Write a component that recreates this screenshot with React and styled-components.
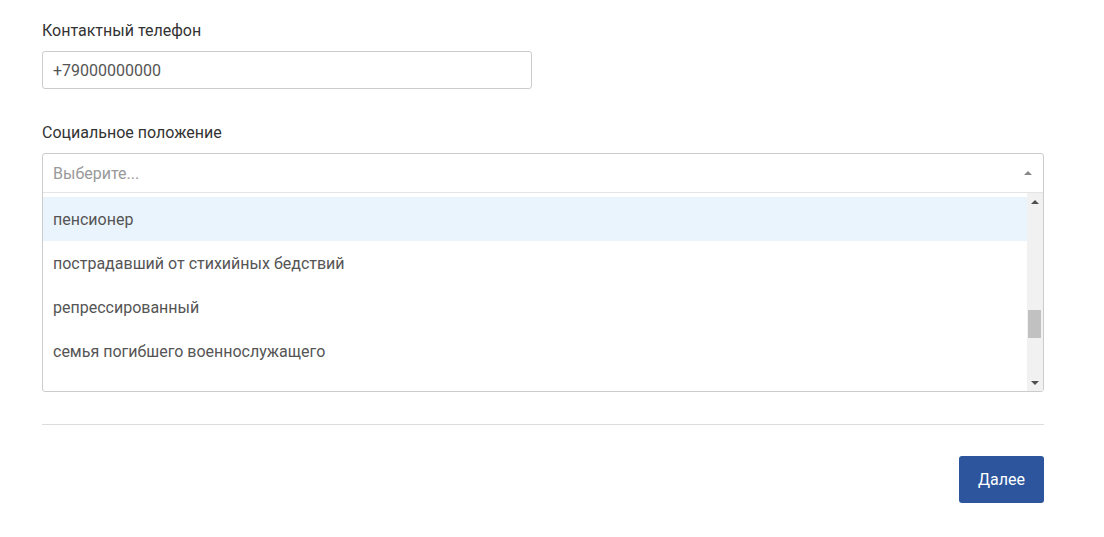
import styled, { createGlobalStyle } from 'styled-components';

const GlobalStyle = createGlobalStyle`
    body {
        margin: 0;
        background: #ffffff;
        font-family: Roboto, "Liberation Sans", Arial, sans-serif;
    }
`;

const Page = styled.div`
    width: 1002px;
    padding: 20px 0 0 42px;
`;

const Field = styled.div`
    display: flex;
    flex-direction: column;
    margin-bottom: ${props => props.gap || 0}px;
`;

const Label = styled.label`
    font-size: 16px;
    line-height: 22px;
    color: #333333;
    margin-bottom: 9px;
`;

const TextInput = styled.div`
    width: 490px;
    height: 38px;
    box-sizing: border-box;
    border: 1px solid #cccccc;
    border-radius: 3px;
    padding: 0 10px;
    display: flex;
    align-items: center;
    font-size: 16px;
    color: #555555;
`;

const SelectBox = styled.div`
    width: 1002px;
    box-sizing: border-box;
    border: 1px solid #cccccc;
    border-radius: 3px;
    background: #ffffff;
`;

const SelectHead = styled.div`
    height: 38px;
    display: flex;
    align-items: center;
    justify-content: space-between;
    padding: 0 11px 0 10px;
    border-bottom: 1px solid #e4e4e4;
    font-size: 16px;
    color: #999999;
`;

const Caret = styled.span`
    width: 0;
    height: 0;
    border-left: 4px solid transparent;
    border-right: 4px solid transparent;
    border-${props => props.down ? 'top' : 'bottom'}: 4px solid ${props => props.color || '#888888'};
`;

const Dropdown = styled.div`
    display: flex;
    height: 198px;
`;

const OptionList = styled.ul`
    flex: 1;
    list-style: none;
    margin: 0;
    padding: 4px 0 0;
    overflow: hidden;
`;

const Option = styled.li`
    height: 44px;
    display: flex;
    align-items: center;
    padding: 0 10px;
    font-size: 16px;
    color: #555555;
    background: ${props => props.active ? '#eaf4fd' : 'transparent'};
`;

const Scrollbar = styled.div`
    width: 16px;
    display: flex;
    flex-direction: column;
    align-items: center;
    background: #f1f1f1;
`;

const ScrollArrow = styled.div`
    height: 17px;
    width: 100%;
    display: flex;
    align-items: center;
    justify-content: center;
`;

const Track = styled.div`
    flex: 1;
    width: 100%;
    position: relative;
`;

const Thumb = styled.div`
    position: absolute;
    left: 1px;
    right: 2px;
    height: 28px;
    background: #c1c1c1;
`;

const Divider = styled.hr`
    border: none;
    border-top: 1px solid #dddddd;
    margin: 32px 0 31px;
`;

const Actions = styled.div`
    display: flex;
    justify-content: flex-end;
`;

const PrimaryButton = styled.button`
    width: 85px;
    height: 47px;
    border: none;
    border-radius: 3px;
    background: #2c559d;
    color: #ffffff;
    font-family: Roboto, "Liberation Sans", Arial, sans-serif;
    font-size: 16px;
    cursor: pointer;
`;

const options = [
    'пенсионер',
    'пострадавший от стихийных бедствий',
    'репрессированный',
    'семья погибшего военнослужащего',
];

const App = () => {
    const thumbTop = 100;
    return (
        <Page>
            <GlobalStyle />
            <Field gap={33}>
                <Label>Контактный телефон</Label>
                <TextInput>+79000000000</TextInput>
            </Field>
            <Field>
                <Label>Социальное положение</Label>
                <SelectBox>
                    <SelectHead>
                        Выберите...
                        <Caret />
                    </SelectHead>
                    <Dropdown>
                        <OptionList>
                            {options.map((item, i) => (
                                <Option key={item} active={i === 0}>{item}</Option>
                            ))}
                        </OptionList>
                        <Scrollbar>
                            <ScrollArrow><Caret color="#505050" /></ScrollArrow>
                            <Track>
                                <Thumb style={{ top: thumbTop }} />
                            </Track>
                            <ScrollArrow><Caret down color="#505050" /></ScrollArrow>
                        </Scrollbar>
                    </Dropdown>
                </SelectBox>
            </Field>
            <Divider />
            <Actions>
                <PrimaryButton>Далее</PrimaryButton>
            </Actions>
        </Page>
    );
};

export default App;
